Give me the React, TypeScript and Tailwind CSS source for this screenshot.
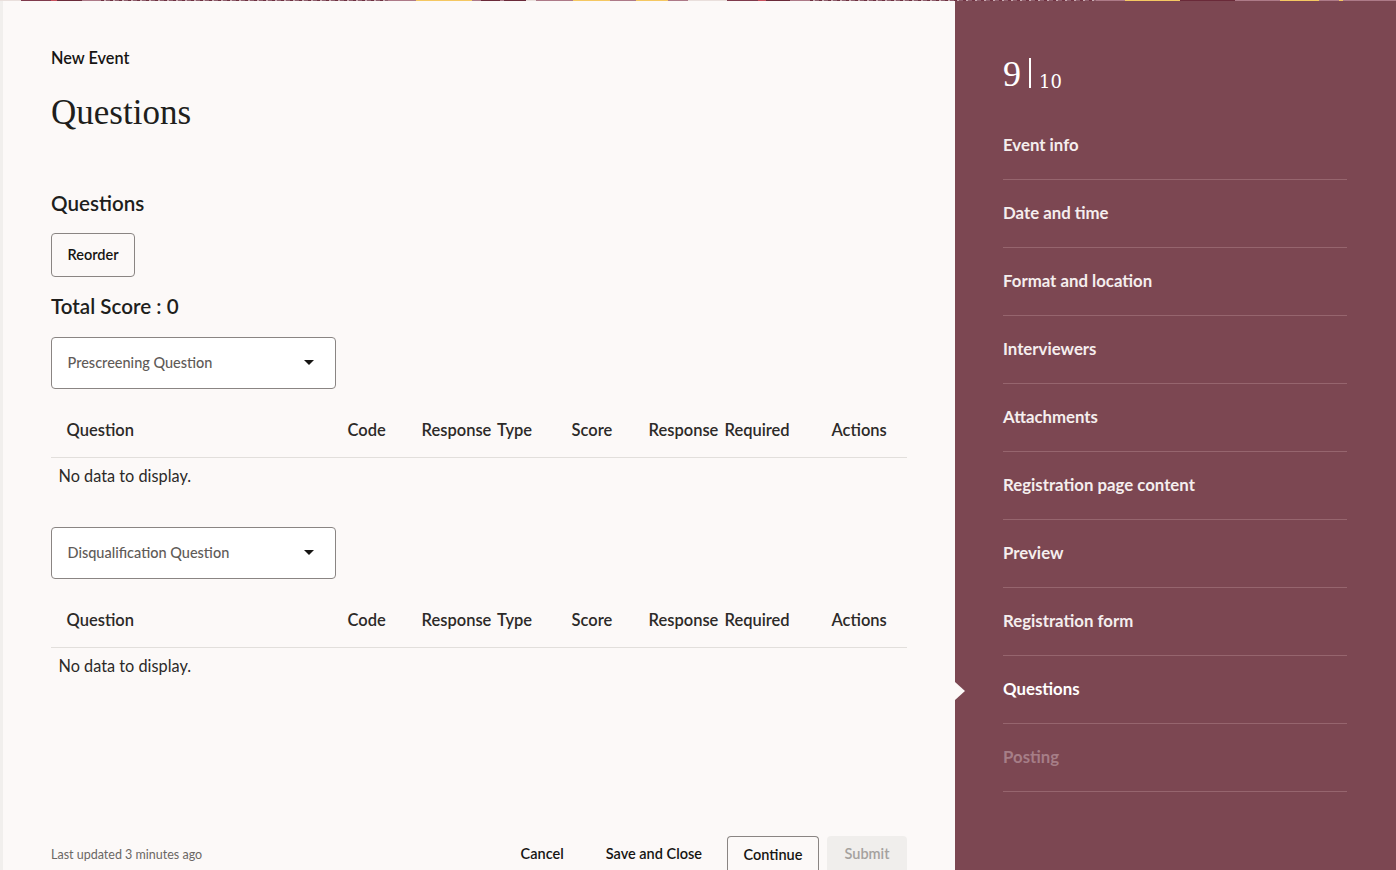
const sans = "font-['Lato',sans-serif]"

const steps = ['Event info', 'Date and time', 'Format and location', 'Interviewers', 'Attachments', 'Registration page content', 'Preview', 'Registration form', 'Questions', 'Posting']

const pale = '#e9dfdc'
const wine = '#7f3a4c'
const red = '#c9505c'
const dark = '#6a2a39'
const mauve = '#ad7a88'
const gold = '#f5c862'
const mix = 'repeating-linear-gradient(90deg,#6e3040 0 3px,#c9a9b1 3px 5px,#8f5f6d 5px 9px)'

// colour segments of the thin banner at the top of the page
const strip: [number, string][] = [
  [21, pale], [31, wine], [6, red], [25, dark], [20, mauve], [292, mix], [28, mauve], [57, gold], [9, mauve], [20, dark], [4, mauve], [22, dark], [10, pale], [38, mauve],
  [37, gold], [27, mauve], [13, gold], [20, gold], [20, mauve],
  [40, pale], [31, wine], [8, red], [25, dark], [20, mauve], [291, mix], [29, mauve], [56, gold], [56, dark], [46, mauve], [40, gold], [20, mauve], [4, gold], [54, mauve],
]

function QuestionSection({ label }: { label: string }) {
  return (
    <div>
      <div className="flex h-[52px] w-[285px] items-center justify-between rounded-[4px] border border-[#8a8583] bg-white pl-[15.5px] pr-[21px]">
        <span className="text-[14.5px] font-medium text-[#5f5b58]">{label}</span>
        <svg width="10" height="5" viewBox="0 0 10 5" className="mb-0.5"><path d="M0 0h10L5 5z" fill="#161513" /></svg>
      </div>
      <div className="flex h-[69px] items-end border-b border-[#e2dfdc] pb-[16px] text-[16.5px] font-semibold leading-[22px] text-[#2c2a28] [word-spacing:2px]">
        <span className="ml-[15.5px] w-[281px]">Question</span>
        <span className="w-[74px]">Code</span>
        <span className="w-[150px]">Response Type</span>
        <span className="w-[77px]">Score</span>
        <span className="w-[183px]">Response Required</span>
        <span>Actions</span>
      </div>
      <div className="h-[69px] pl-[7.5px] pt-[7px] text-[16.3px] leading-[22px] text-[#2c2a28]">No data to display.</div>
    </div>
  )
}

export default function App() {
  return (
    <div className={`relative flex h-[870px] w-[1396px] overflow-hidden bg-[#fcf9f8] ${sans}`}>
      <div className="absolute left-0 right-0 top-0 z-10 flex h-px">
        {strip.map(([w, c], i) => (
          <div key={i} className="h-full" style={{ width: w, background: c }} />
        ))}
      </div>

      <main className="flex w-[955px] flex-col border-l-[3px] border-[#f1efed] pl-[48px] pr-[48px]">
        <div className="pt-[48px] text-[16.3px] font-semibold leading-[20px] text-[#161513]">New Event</div>
        <h1 className="mt-[20px] font-['Liberation_Serif',serif] text-[35px] leading-[50px] text-[#201e1c]">Questions</h1>
        <h2 className="mt-[50px] text-[20.6px] font-semibold leading-[30px] text-[#201e1c]">Questions</h2>
        <button className="mt-[15px] h-[44px] w-[84px] rounded-[4px] border border-[#8a8583] text-[14.5px] font-semibold text-[#161513]">Reorder</button>
        <div className="mt-[14px] mb-[16px] text-[20.6px] font-semibold leading-[30px] text-[#201e1c]">Total Score : 0</div>
        <div className="flex flex-col">
          <QuestionSection label="Prescreening Question" />
          <QuestionSection label="Disqualification Question" />
        </div>
        <div className="mt-auto flex items-center">
          <span className="mt-[4px] text-[12.5px] text-[#6b6764]">Last updated 3 minutes ago</span>
          <div className="ml-auto flex h-[34px] items-start gap-[8px] text-[14.5px] font-semibold leading-[34px] text-[#161513]">
            <button className="mr-[6px] h-[36px] px-[12px]">Cancel</button>
            <button className="h-[36px] pl-[16px] pr-[17px]">Save and Close</button>
            <button className="h-[36px] w-[92px] rounded-t-[4px] border border-b-0 border-[#8a8583]">Continue</button>
            <button className="h-[36px] w-[80px] rounded-t-[4px] bg-[#f0eeec] text-[#a5a19e]">Submit</button>
          </div>
        </div>
      </main>

      <aside className="relative w-[441px] bg-[#7c4752] pl-[48px] pr-[49px] pt-[54px]">
        <div className="flex h-[37px] items-end text-white">
          <span className="mb-[-2px] font-['Liberation_Serif',serif] text-[36px] leading-[38px]">9</span>
          <span className="mb-[3px] ml-[8px] h-[30px] w-[2px] bg-white" />
          <span className="mb-[-2px] ml-[8px] font-['DejaVu_Serif',serif] text-[18px] leading-[22px]">10</span>
        </div>
        <nav className="mt-[21px]">
          {steps.map((s) => (
            <div key={s} className={`flex h-[68px] items-center border-b border-[#96656e] pb-[2px] text-[16.8px] font-bold ${s === 'Posting' ? 'text-[#a67e87]' : s === 'Questions' ? 'text-white' : 'text-[#f5eeee]'}`}>
              {s}
            </div>
          ))}
        </nav>
        <div className="absolute left-0 top-[682px] h-0 w-0 border-y-[9px] border-l-[10px] border-y-transparent border-l-[#fcf9f8]" />
      </aside>
    </div>
  )
}
